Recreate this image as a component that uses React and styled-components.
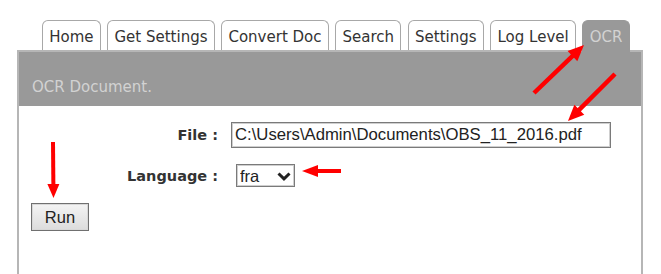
import React from "react";
import styled, { createGlobalStyle } from "styled-components";

const GlobalStyle = createGlobalStyle`
  html, body {
    margin: 0;
    padding: 0;
    overflow: hidden;
    background: #fff;
  }
`;

const Page = styled.div`
  position: relative;
  width: 661px;
  height: 274px;
  box-sizing: border-box;
  padding: 20px 0 0 17px;
  font-family: "DejaVu Sans", Verdana, sans-serif;
`;

const TabBar = styled.ul`
  position: relative;
  z-index: 1;
  display: flex;
  align-items: flex-start;
  gap: 6.6px;
  height: 30px;
  margin: 0 0 0 25px;
  padding: 0;
  list-style: none;
`;

const Tab = styled.li`
  box-sizing: border-box;
  height: ${(p) => (p.$active ? "32px" : "30px")};
  padding: 2px 6.2px 0;
  border: 1px solid ${(p) => (p.$active ? "#999" : "#a8a8a8")};
  border-bottom: none;
  border-radius: 6px 6px 0 0;
  background: ${(p) => (p.$active ? "#999" : "#fff")};
  color: ${(p) => (p.$active ? "#d2d2d2" : "#333")};
  font-size: 15px;
  line-height: 28px;
  white-space: nowrap;
`;

const Panel = styled.section`
  box-sizing: border-box;
  width: 626px;
  height: 224px;
  border: 2px solid #b6b6b6;
  border-bottom: none;
`;

const Header = styled.h2`
  box-sizing: border-box;
  height: 54px;
  margin: 0;
  padding: 27px 13px 10px;
  background: #999;
  color: #d2d2d2;
  font-size: 15px;
  font-weight: normal;
  line-height: 17px;
`;

const Form = styled.div`
  padding: 16px 0 0;
`;

const Fields = styled.div`
  display: grid;
  grid-template-columns: 199px auto;
  column-gap: 13px;
  row-gap: 16px;
  align-items: center;
  justify-items: start;
`;

const Label = styled.label`
  justify-self: end;
  color: #333;
  font-size: 14.5px;
  font-weight: bold;
  white-space: nowrap;
`;

const TextInput = styled.input`
  box-sizing: border-box;
  width: 380px;
  height: 26px;
  margin: 0;
  padding: 0 0 0 3px;
  border: 1px solid #7a7a7a;
  box-shadow: inset 0 0 0 1px #cfcfcf;
  background: #fff;
  color: #222;
  font-family: "Liberation Sans", Arial, sans-serif;
  font-size: 16.7px;
  outline: none;
`;

const SelectWrap = styled.span`
  position: relative;
  display: inline-block;
  width: 59px;
  height: 23px;
  margin-left: 5px;
`;

const Select = styled.select`
  box-sizing: border-box;
  width: 100%;
  height: 100%;
  margin: 0;
  padding: 0 0 0 3px;
  appearance: none;
  -webkit-appearance: none;
  border: 1px solid #7a7a7a;
  box-shadow: inset 0 0 0 1px #cfcfcf;
  border-radius: 0;
  background: #fff;
  color: #222;
  font-family: "Liberation Sans", Arial, sans-serif;
  font-size: 16.5px;
  outline: none;
`;

const Chevron = styled.svg`
  position: absolute;
  left: 41px;
  top: 8px;
  pointer-events: none;
`;

const RunButton = styled.button`
  box-sizing: border-box;
  display: block;
  width: 58px;
  height: 28px;
  margin: 16px 0 0 12px;
  padding: 0;
  border: 1px solid #707070;
  box-shadow: inset 0 0 0 1px #d8d8d8;
  background: linear-gradient(#f4f4f4, #dcdcdc);
  color: #222;
  font-family: "Liberation Sans", Arial, sans-serif;
  font-size: 16.5px;
`;

const Annotations = styled.svg`
  position: absolute;
  left: 0;
  top: 0;
  pointer-events: none;
  z-index: 5;
`;

const tabs = ["Home", "Get Settings", "Convert Doc", "Search", "Settings", "Log Level", "OCR"];

function Arrow({ x1, y1, x2, y2, len = 16, half = 7, width = 4.5 }) {
  const dx = x2 - x1;
  const dy = y2 - y1;
  const d = Math.hypot(dx, dy);
  const ux = dx / d;
  const uy = dy / d;
  const bx = x2 - ux * len;
  const by = y2 - uy * len;
  const px = -uy;
  const py = ux;
  return (
    <g fill="#f00" stroke="none">
      <line x1={x1} y1={y1} x2={bx + ux} y2={by + uy} stroke="#f00" strokeWidth={width} />
      <polygon
        points={`${x2},${y2} ${bx + px * half},${by + py * half} ${bx - px * half},${by - py * half}`}
      />
    </g>
  );
}

export default function App() {
  return (
    <>
      <GlobalStyle />
      <Page>
        <TabBar>
          {tabs.map((t) => (
            <Tab key={t} $active={t === "OCR"}>
              {t}
            </Tab>
          ))}
        </TabBar>
        <Panel>
          <Header>OCR Document.</Header>
          <Form>
            <Fields>
              <Label htmlFor="file">File :</Label>
              <TextInput id="file" defaultValue="C:\Users\Admin\Documents\OBS_11_2016.pdf" />
              <Label htmlFor="lang">Language :</Label>
              <SelectWrap>
                <Select id="lang" defaultValue="fra">
                  <option value="fra">fra</option>
                  <option value="eng">eng</option>
                </Select>
                <Chevron width="14" height="9" viewBox="0 0 14 9">
                  <polyline points="1.5,1.5 7,6.8 12.5,1.5" fill="none" stroke="#222" strokeWidth="3" />
                </Chevron>
              </SelectWrap>
            </Fields>
            <RunButton>Run</RunButton>
          </Form>
        </Panel>
        <Annotations width="661" height="274" viewBox="0 0 661 274">
          <Arrow x1={534} y1={93} x2={584} y2={45} />
          <Arrow x1={615} y1={74} x2={568} y2={121} />
          <Arrow x1={341} y1={171} x2={302} y2={171} len={16} half={6} width={4} />
          <Arrow x1={53} y1={142} x2={53.5} y2={198} len={14} half={6} width={4} />
        </Annotations>
      </Page>
    </>
  );
}
